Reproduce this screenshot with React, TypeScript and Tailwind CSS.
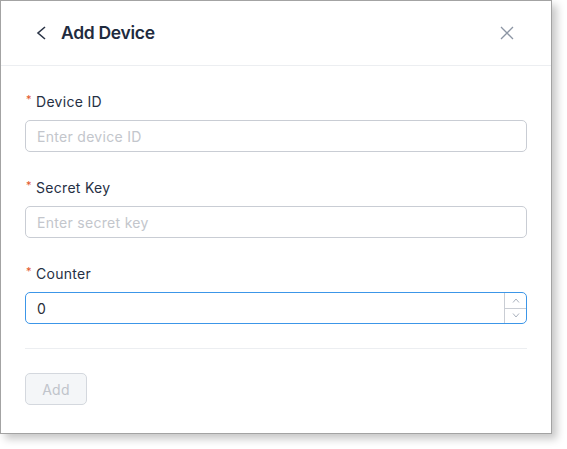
import React from "react";

const fields = [
  { label: "Device ID", placeholder: "Enter device ID" },
  { label: "Secret Key", placeholder: "Enter secret key" },
];

function Label({ text }: { text: string }) {
  return (
    <div className="flex items-center h-5 text-[14px] text-[#263044] tracking-[0.3px]">
      <span className="text-[#e2572c] text-[11px] w-[11px] pl-[1px] mt-[-3px]">*</span>
      <span>{text}</span>
    </div>
  );
}

export default function App() {
  return (
    <div className="min-h-screen bg-white" style={{ fontFamily: "Inter, 'Noto Sans', sans-serif" }}>
      <div className="w-[552px] h-[434px] bg-white border border-[#a3a3a3] shadow-[5px_5px_8px_rgba(0,0,0,0.22)] flex flex-col">
        {/* header */}
        <div className="h-[65px] border-b border-[#eceef1] flex items-center pl-[35px] pr-[37px]">
          <svg width="11" height="14" viewBox="0 0 11 14" className="mr-[14px]">
            <polyline points="9,1 2,7 9,13" fill="none" stroke="#2b3547" strokeWidth="1.6" />
          </svg>
          <h1 className="text-[17.5px] font-semibold text-[#1f2b3e] tracking-[-0.3px]">Add Device</h1>
          <svg width="14" height="14" viewBox="0 0 14 14" className="ml-auto">
            <path d="M1 1 L13 13 M13 1 L1 13" stroke="#8c95a4" strokeWidth="1.3" />
          </svg>
        </div>

        {/* body */}
        <div className="px-[24px] pt-[25px] flex flex-col">
          {fields.map((f) => (
            <div key={f.label} className="mb-[25px]">
              <Label text={f.label} />
              <input
                placeholder={f.placeholder}
                className="mt-[9px] w-full h-[32px] border border-[#c9cdd4] rounded-[5px] px-[11px] text-[14px] tracking-[0.3px] text-[#333] placeholder:text-[#c3c6cc] outline-none"
              />
            </div>
          ))}
          <div>
            <Label text="Counter" />
            <div className="mt-[9px] w-full h-[32px] border border-[#3c96e8] rounded-[5px] flex items-stretch overflow-hidden">
              <div className="flex-1 pl-[11px] flex items-center text-[14px] text-[#2a2f38]">0</div>
              <div className="w-[22px] border-l border-[#c9cdd4] flex flex-col">
                <div className="flex-1 flex items-center justify-center border-b border-[#c9cdd4]">
                  <svg width="8" height="5" viewBox="0 0 8 5">
                    <polyline points="1,4.5 4,1 7,4.5" fill="none" stroke="#aab2be" strokeWidth="1" />
                  </svg>
                </div>
                <div className="flex-1 flex items-center justify-center">
                  <svg width="8" height="5" viewBox="0 0 8 5">
                    <polyline points="1,0.5 4,4 7,0.5" fill="none" stroke="#aab2be" strokeWidth="1" />
                  </svg>
                </div>
              </div>
            </div>
          </div>

          <div className="mt-[24px] border-t border-[#eceef1]" />

          <div className="pt-[24px]">
            <button className="w-[62px] h-[32px] bg-[#f4f6f8] border border-[#d4d8de] rounded-[5px] text-[14px] tracking-[0.3px] text-[#c0c4cb]">
              Add
            </button>
          </div>
        </div>
      </div>
    </div>
  );
}
